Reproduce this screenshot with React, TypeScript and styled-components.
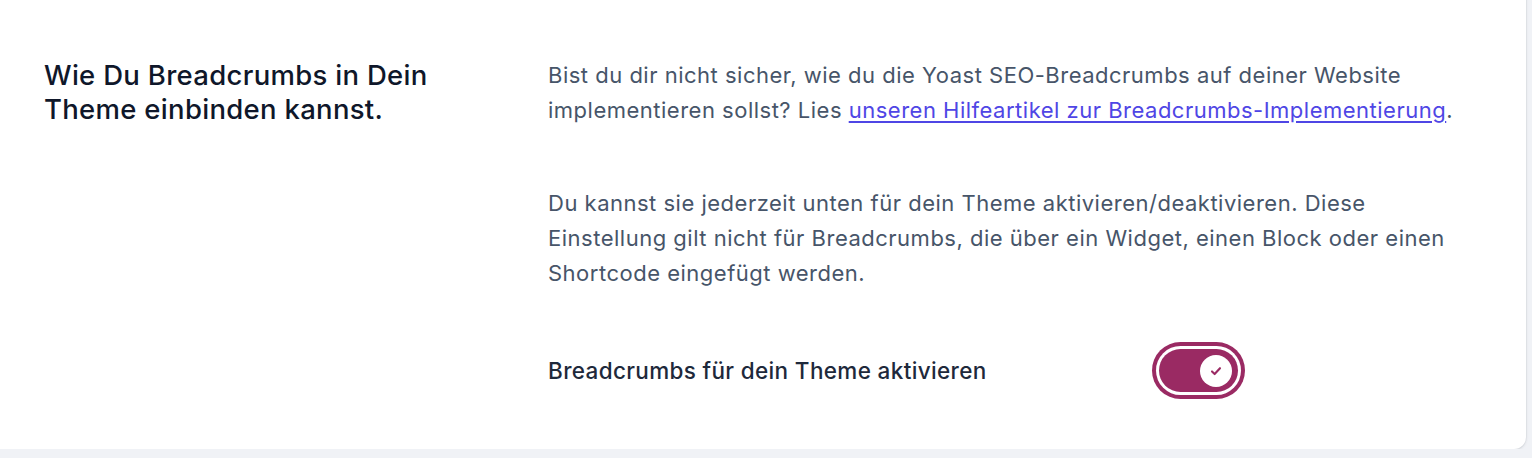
import React from "react";
import styled, { createGlobalStyle } from "styled-components";

const GlobalStyle = createGlobalStyle`
  html, body { margin: 0; padding: 0; }
  body {
    background: #f0f2f6;
    font-family: Inter, "Noto Sans", "Liberation Sans", sans-serif;
    -webkit-font-smoothing: antialiased;
  }
`;

const Card = styled.section`
  margin: -20px 6px 0 -20px;
  padding: 78px 40px 57px 64px;
  background: #ffffff;
  border-radius: 12px;
  box-shadow: 0 1px 3px rgba(15, 23, 42, 0.12), 0 0 0 1px rgba(15, 23, 42, 0.03);
  display: grid;
  grid-template-columns: 460px 1fr;
  column-gap: 44px;
`;

const Title = styled.h2`
  margin: 0;
  max-width: 420px;
  font-size: 27.5px;
  line-height: 34px;
  font-weight: 450;
  letter-spacing: 0.3px;
  color: #0f172a;
`;

const Body = styled.div`
  display: flex;
  flex-direction: column;
  max-width: 912px;
`;

const Paragraph = styled.p<{ $gap?: number }>`
  margin: 0 0 ${(p) => p.$gap ?? 0}px;
  font-size: 22px;
  line-height: 35px;
  letter-spacing: 0.5px;
  color: #475569;
`;

const Link = styled.a`
  color: #4f46e5;
  text-decoration: underline;
  text-underline-offset: 3px;
`;

const ToggleRow = styled.div`
  display: flex;
  align-items: center;
  justify-content: space-between;
  max-width: 690px;
`;

const Label = styled.span`
  font-size: 22.5px;
  font-weight: 500;
  letter-spacing: 0.35px;
  color: #1e293b;
`;

const Switch = styled.button<{ $on: boolean }>`
  width: 79px;
  height: 43px;
  border: none;
  border-radius: 999px;
  background: ${(p) => (p.$on ? "#9a2a63" : "#cbd5e1")};
  box-shadow: 0 0 0 3px #ffffff, 0 0 0 7px #9a2a63;
  cursor: pointer;
  display: flex;
  align-items: center;
  justify-content: ${(p) => (p.$on ? "flex-end" : "flex-start")};
  padding: 0 6px;
`;

const Knob = styled.span`
  width: 32px;
  height: 32px;
  border-radius: 50%;
  background: #ffffff;
  display: flex;
  align-items: center;
  justify-content: center;
`;

export default function App() {
  return (
    <>
      <GlobalStyle />
      <Card>
        <Title>Wie Du Breadcrumbs in Dein Theme einbinden kannst.</Title>
        <Body>
          <Paragraph $gap={58}>
            Bist du dir nicht sicher, wie du die Yoast SEO-Breadcrumbs auf deiner Website
            implementieren sollst? Lies{" "}
            <Link href="#">unseren Hilfeartikel zur Breadcrumbs-Implementierung</Link>.
          </Paragraph>
          <Paragraph $gap={58}>
            Du kannst sie jederzeit unten für dein Theme aktivieren/deaktivieren. Diese
            Einstellung gilt nicht für Breadcrumbs, die über ein Widget, einen Block oder einen
            Shortcode eingefügt werden.
          </Paragraph>
          <ToggleRow>
            <Label>Breadcrumbs für dein Theme aktivieren</Label>
            <Switch $on={true} role="switch" aria-checked="true">
              <Knob>
                <svg width="16" height="16" viewBox="0 0 20 20" fill="none">
                  <path
                    d="M5 10.5l3.3 3.3 6.7-7.3"
                    stroke="#9a2a63"
                    strokeWidth="2.6"
                    strokeLinecap="round"
                    strokeLinejoin="round"
                  />
                </svg>
              </Knob>
            </Switch>
          </ToggleRow>
        </Body>
      </Card>
    </>
  );
}
